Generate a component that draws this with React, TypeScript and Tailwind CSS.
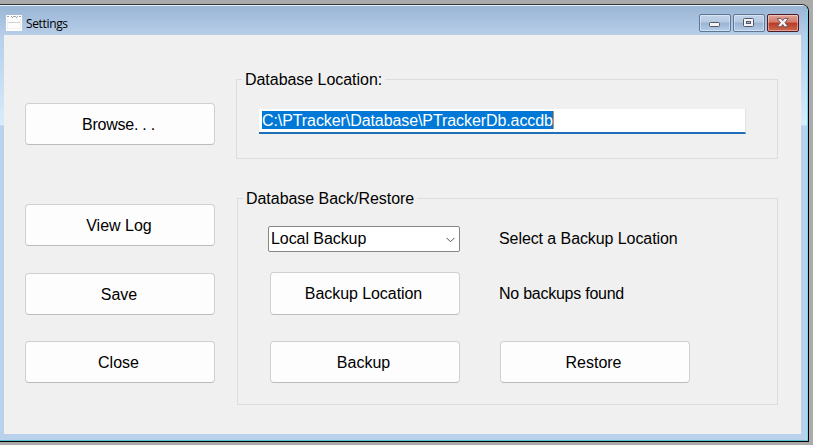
import type { ReactNode } from 'react';

function PushButton({ children, className = '' }: { children: ReactNode; className?: string }) {
  return (
    <button
      className={`flex w-[190px] shrink-0 items-center justify-center rounded-[4px] border border-[#d0d0d0] border-b-[#bcbcbc] bg-[#fdfdfd] ${className || 'h-[42px] pt-[2px]'}`}
    >
      {children}
    </button>
  );
}

function GroupBox({ title, className, children }: { title: string; className: string; children: ReactNode }) {
  return (
    <section className={`border border-[#dcdcdc] ${className}`}>
      <h2 className="-mt-[9px] ml-[5px] w-fit bg-[#f0f0f0] px-[3px] leading-[18px] tracking-[-0.04px]">{title}</h2>
      {children}
    </section>
  );
}

function CaptionButton({ children, close = false }: { children: ReactNode; close?: boolean }) {
  const tone = close
    ? 'border-[#4d1a26] bg-[linear-gradient(#e0a396_0%,#d27a68_45%,#b83a25_50%,#cc6a50_100%)]'
    : 'border-[#5f7796] bg-[linear-gradient(#c3d4e8_0%,#b4c9e1_45%,#98b3d2_50%,#b4cde8_100%)]';
  return (
    <button
      className={`flex h-[18px] w-8 items-center justify-center rounded-[2px] border shadow-[inset_0_0_0_1px_rgba(255,255,255,0.4)] ${tone}`}
    >
      <svg width="14" height="12" viewBox="0 0 14 12" className="shrink-0">
        {children}
      </svg>
    </button>
  );
}

function TitleBar() {
  return (
    <header className="flex h-[29px] items-start bg-[linear-gradient(#9ab5d5,#b7cee8)] pr-2">
      <svg className="mt-[9px] ml-[6px]" width="16" height="16" viewBox="0 0 16 16" shapeRendering="crispEdges">
        <rect width="16" height="16" fill="#fdfdfd" />
        <path d="M1 1.5h2M5 1.5h1M7 1.5h3M11 1.5h1M13 1.5h2" stroke="#a5a5a5" />
        <path d="M6 2.5h1M10 2.5h1" stroke="#999" />
        <path d="M1 7.5h14" stroke="#d4d4d4" />
        <path d="M1.5 4v10M14.5 4v10M1 13.5h14" stroke="#f0f0f0" />
      </svg>
      <h1 className="mt-[9px] ml-1 font-['Open_Sans','Noto_Sans',sans-serif] text-[12px] leading-[17px] tracking-[-0.35px]">
        Settings
      </h1>
      <div className="mt-2 ml-auto flex gap-[2px]">
        <CaptionButton>
          <rect x="1.5" y="5.5" width="10" height="4" rx="1" fill="#f4f4f4" stroke="#535666" />
        </CaptionButton>
        <CaptionButton>
          <rect x="1.5" y="1.5" width="10" height="8" rx="1" fill="#f4f4f4" stroke="#535666" />
          <rect x="4.5" y="4.5" width="4" height="2" fill="#a9bfd8" stroke="#535666" />
        </CaptionButton>
        <CaptionButton close>
          <path
            d="M1.2 1.5h3.8L6.7 3.7l1.7-2.2h3.8L8.9 5.6l3.3 4.1H8.4L6.7 7.5 5 9.7H1.2l3.3-4.1z"
            fill="#f8f8f8"
            stroke="#5c4450"
            strokeWidth="0.8"
            strokeLinejoin="round"
          />
        </CaptionButton>
      </div>
    </header>
  );
}

export default function App() {
  return (
    <div className="h-[445px] w-[813px] overflow-hidden bg-[#ababab] pt-1 font-['Liberation_Sans',Arial,sans-serif] text-[16px] text-black">
      <div className="h-[438px] w-[809px] overflow-hidden rounded-tr-[7px] border-t border-r border-b border-t-[#333] border-r-black border-b-black bg-[#b9d1ea]">
        <div className="flex h-[436px] flex-col rounded-tr-[6px] border-t border-r border-b border-t-[#e9f3fc] border-r-[#6fd9f5] border-b-[#58bfd2] bg-[linear-gradient(#9ab5d5_0px,#b7cee8_29px,#bcd5ee_50px,#d9eafa_115px,#d9eafa_119px,#b9d1ea_120px)]">
          <TitleBar />
          <main className="ml-1 flex h-[399px] w-[797px] items-start bg-[#f0f0f0]">
            <nav className="ml-[21px] flex flex-col pt-[68px]">
              <PushButton>
                <span className="pr-[3px] tracking-[-0.25px]">Browse. . .</span>
              </PushButton>
              <div className="mt-[59px] flex flex-col">
                <PushButton>
                  <span className="pr-[2px]">View Log</span>
                </PushButton>
                <div className="h-[27px]" />
                <PushButton>
                  <span className="pr-[2px]">Save</span>
                </PushButton>
                <div className="h-[26px]" />
                <PushButton>
                  <span className="pr-[3px]">Close</span>
                </PushButton>
              </div>
            </nav>
            <div className="ml-[21px] pt-11">
              <GroupBox title="Database Location:" className="h-20 w-[542px]">
                <div className="mt-5 ml-[22px] flex h-[25px] w-[487px] border-r border-b-2 border-r-[#e3e3e3] border-b-[#1f6fb8] bg-white pt-[2px] pl-[3px]">
                  <span className="h-[18px] border-r border-[#d98a50] bg-[#0078d7] leading-5 tracking-[-0.085px] text-white">
                    C:\PTracker\Database\PTrackerDb.accdb
                  </span>
                </div>
              </GroupBox>
              <GroupBox title="Database Back/Restore" className="mt-[39px] ml-[1px] h-[207px] w-[541px]">
                <div className="mt-[18px] ml-[30px] flex items-center">
                  <div className="flex h-[26px] w-[192px] items-center justify-between rounded-[2px] border border-[#868686] bg-white pr-1 pl-[2px]">
                    <span className="leading-6 tracking-[-0.07px]">Local Backup</span>
                    <svg width="9" height="6" viewBox="0 0 9 6" className="mt-[2px]">
                      <path d="M0.5 0.8l4 4 4-4" fill="none" stroke="#555" />
                    </svg>
                  </div>
                  <span className="ml-[39px] tracking-[-0.08px]">Select a Backup Location</span>
                </div>
                <div className="mt-5 ml-8 flex items-center">
                  <PushButton className="h-[43px]">
                    <span className="pr-[3px] tracking-[-0.06px]">Backup Location</span>
                  </PushButton>
                  <span className="ml-[39px] tracking-[-0.25px]">No backups found</span>
                </div>
                <div className="mt-[26px] ml-8 flex gap-10">
                  <PushButton>
                    <span className="pr-[3px]">Backup</span>
                  </PushButton>
                  <PushButton>
                    <span className="pr-[3px]">Restore</span>
                  </PushButton>
                </div>
              </GroupBox>
            </div>
          </main>
        </div>
      </div>
    </div>
  );
}
